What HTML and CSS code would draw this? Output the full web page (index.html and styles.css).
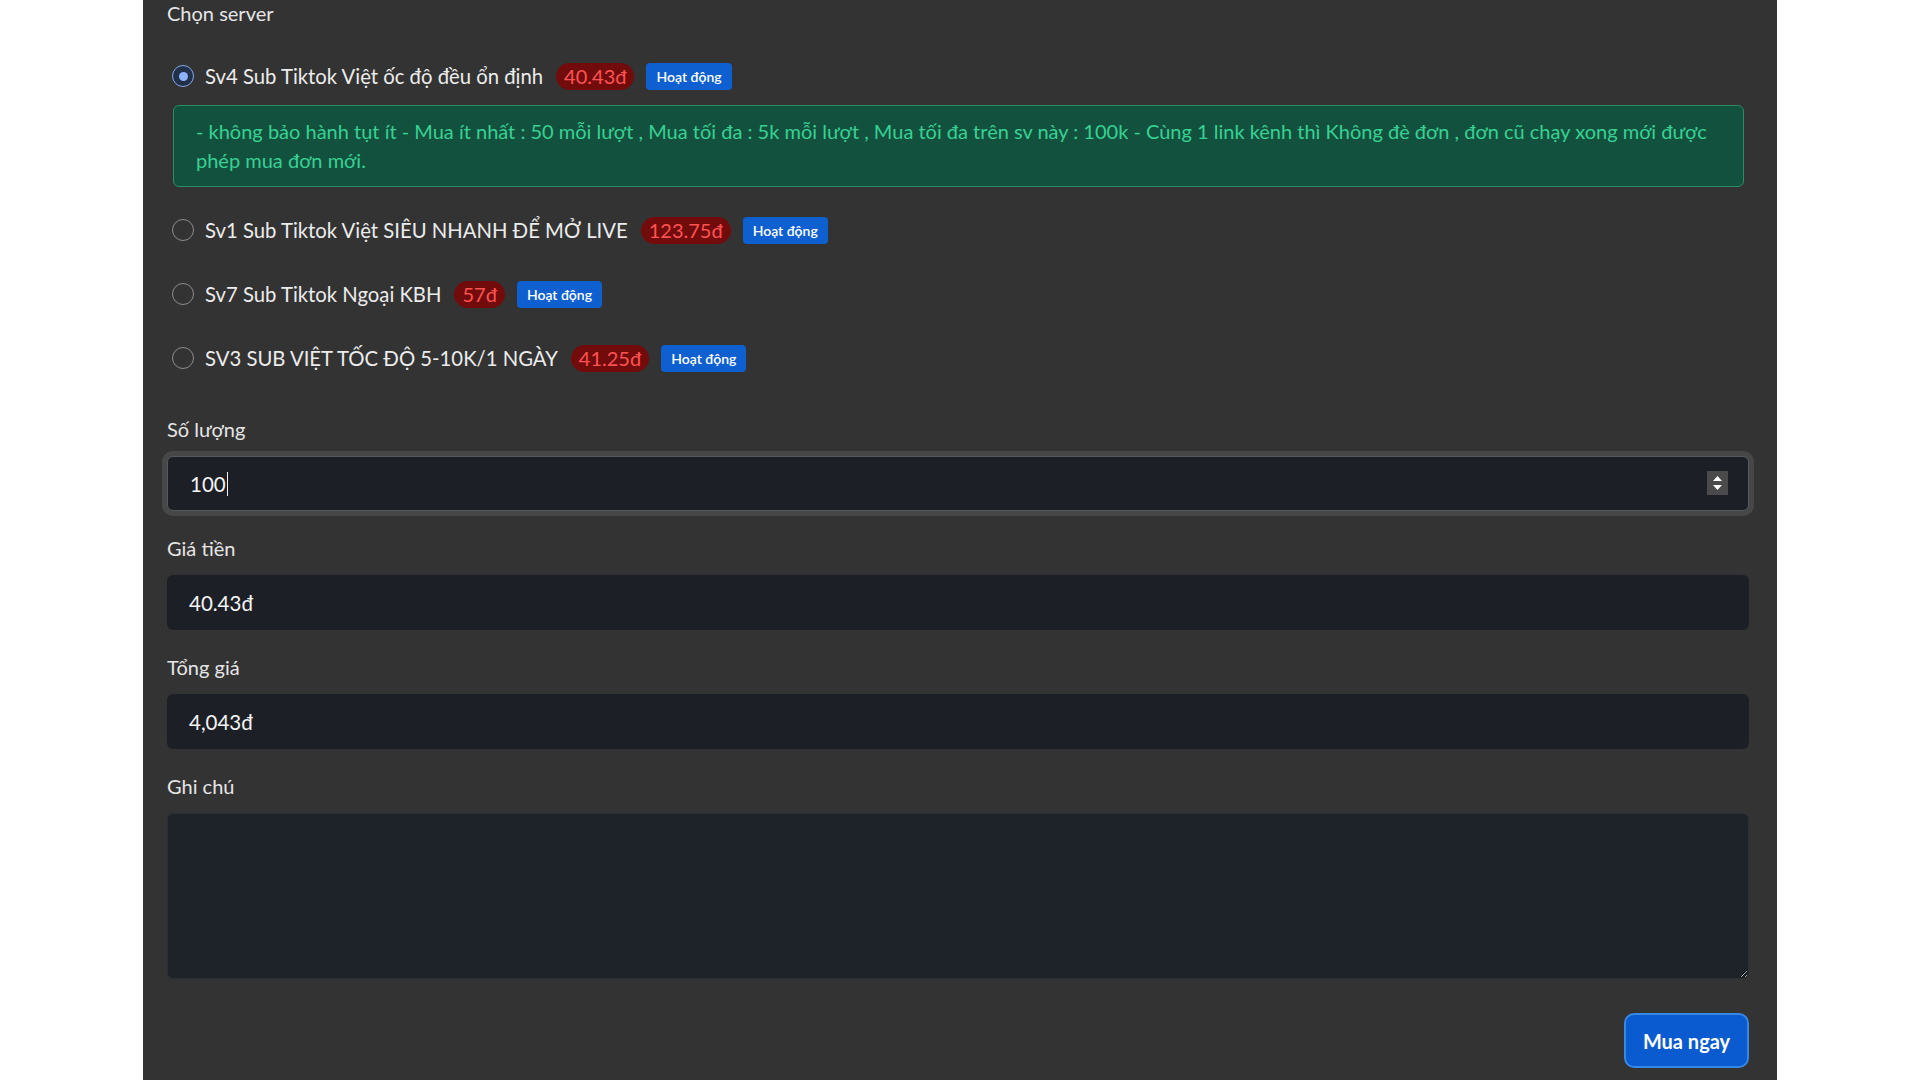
FILE: index.html
```html
<!DOCTYPE html>
<html lang="vi">
<head>
<meta charset="utf-8">
<title>Mua Sub Tiktok</title>
<link rel="stylesheet" href="styles.css">
</head>
<body>
<main class="panel">
  <section class="group group-server">
    <div class="label">Chọn server</div>
    <div class="servers">
      <div class="server">
        <div class="server-row">
          <span class="radio checked"></span>
          <span class="server-name">Sv4 Sub Tiktok Việt ốc độ đều ổn định</span>
          <span class="price">40.43đ</span>
          <span class="status">Hoạt động</span>
        </div>
        <div class="alert">- không bảo hành tụt ít - Mua ít nhất : 50 mỗi lượt , Mua tối đa : 5k mỗi lượt , Mua tối đa trên sv này : 100k - Cùng 1 link kênh thì Không đè đơn , đơn cũ chạy xong mới được phép mua đơn mới.</div>
      </div>
      <div class="server">
        <div class="server-row">
          <span class="radio"></span>
          <span class="server-name">Sv1 Sub Tiktok Việt SIÊU NHANH ĐỂ MỞ LIVE</span>
          <span class="price">123.75đ</span>
          <span class="status">Hoạt động</span>
        </div>
      </div>
      <div class="server">
        <div class="server-row">
          <span class="radio"></span>
          <span class="server-name">Sv7 Sub Tiktok Ngoại KBH</span>
          <span class="price">57đ</span>
          <span class="status">Hoạt động</span>
        </div>
      </div>
      <div class="server">
        <div class="server-row">
          <span class="radio"></span>
          <span class="server-name">SV3 SUB VIỆT TỐC ĐỘ 5-10K/1 NGÀY</span>
          <span class="price">41.25đ</span>
          <span class="status">Hoạt động</span>
        </div>
      </div>
    </div>
  </section>

  <section class="group">
    <div class="label">Số lượng</div>
    <div class="field field-focus">
      <span>100</span><span class="caret"></span>
      <span class="spin">
        <svg width="21" height="24" viewBox="0 0 21 24"><path d="M10.5 5 L15 10 L6 10 Z" fill="#fff"/><path d="M10.5 19 L15 14 L6 14 Z" fill="#fff"/></svg>
      </span>
    </div>
  </section>

  <section class="group">
    <div class="label">Giá tiền</div>
    <div class="field">40.43đ</div>
  </section>

  <section class="group">
    <div class="label">Tổng giá</div>
    <div class="field">4,043đ</div>
  </section>

  <section class="group group-note">
    <div class="label">Ghi chú</div>
    <textarea class="note"></textarea>
  </section>

  <div class="actions">
    <button class="btn-buy">Mua ngay</button>
  </div>
</main>
</body>
</html>
```

FILE: styles.css
```css
html, body {
  margin: 0;
  padding: 0;
  background: #ffffff;
  font-family: Lato, "Noto Sans", "Liberation Sans", sans-serif;
}

.panel {
  width: 1634px;
  min-height: 1080px;
  margin: 0 auto;
  box-sizing: border-box;
  background: #333333;
  padding: 0 28px 0 24px;
  color: #e8e8e8;
  overflow: hidden;
}

.label {
  font-size: 20px;
  line-height: 28px;
  margin-bottom: 13px;
  color: #e6e6e6;
}

.group {
  margin-bottom: 23px;
}

.group-server {
  margin-bottom: 39px;
}

.group-server .label {
  margin-top: -1px;
  margin-bottom: 31px;
}

.servers {
  display: flex;
  flex-direction: column;
  gap: 28px;
}

.server-row {
  display: flex;
  align-items: center;
  height: 36px;
  padding-left: 5px;
}

.radio {
  width: 22px;
  height: 22px;
  box-sizing: border-box;
  border-radius: 50%;
  border: 1.5px solid #8c8c8c;
  margin-right: 11px;
  flex: none;
  position: relative;
}

.radio.checked {
  border-color: #86a9e8;
  background: #22304a;
}

.radio.checked::after {
  content: "";
  position: absolute;
  left: 50%;
  top: 50%;
  width: 9px;
  height: 9px;
  margin: -4.5px 0 0 -4.5px;
  border-radius: 50%;
  background: #8db3ff;
}

.server-name {
  font-size: 20.3px;
  color: #ececec;
  white-space: nowrap;
}

.price {
  margin-left: 13px;
  height: 27px;
  line-height: 27px;
  padding: 0 8px;
  border-radius: 14px;
  background: #720c0c;
  color: #ff5252;
  font-size: 20px;
}

.status {
  margin-left: 12px;
  height: 27px;
  line-height: 27px;
  padding: 0 10px;
  border-radius: 4px;
  background: #0e5fcf;
  color: #ffffff;
  font-size: 14px;
  font-weight: 600;
}

.alert {
  margin: 11px 5px -3px 6px;
  padding: 11px 22px;
  background: #13513f;
  border: 1px solid #2c8c65;
  border-radius: 6px;
  color: #37d193;
  font-size: 20px;
  line-height: 29px;
}

.field {
  position: relative;
  height: 55px;
  box-sizing: border-box;
  display: flex;
  align-items: center;
  padding: 0 22px;
  background: #1c2026;
  border-radius: 6px;
  font-size: 20.5px;
  color: #f4f4f4;
}

.field-focus {
  border: 1px solid #555a60;
  box-shadow: 0 0 0 5px rgba(255, 255, 255, 0.1);
}

.caret {
  display: inline-block;
  width: 1px;
  height: 24px;
  margin-left: 1px;
  background: #f2f2f2;
}

.spin {
  position: absolute;
  right: 20px;
  top: 14px;
  width: 21px;
  height: 24px;
  background: #4a4a4a;
  display: flex;
}

.note {
  display: block;
  width: 100%;
  height: 166px;
  box-sizing: border-box;
  margin: 0;
  background: #1e2229;
  border: 1px solid #2b2f36;
  border-radius: 6px;
  resize: vertical;
  color: #f2f2f2;
  font-family: inherit;
  font-size: 20px;
  padding: 12px 22px;
}

.group-note {
  margin-bottom: 34px;
}

.actions {
  display: flex;
  justify-content: flex-end;
}

.btn-buy {
  width: 125px;
  height: 55px;
  box-sizing: border-box;
  border: 2px solid #3588e6;
  border-radius: 10px;
  background: #0b5bd0;
  color: #ffffff;
  font-family: inherit;
  font-size: 20px;
  font-weight: 700;
  cursor: pointer;
}
```
